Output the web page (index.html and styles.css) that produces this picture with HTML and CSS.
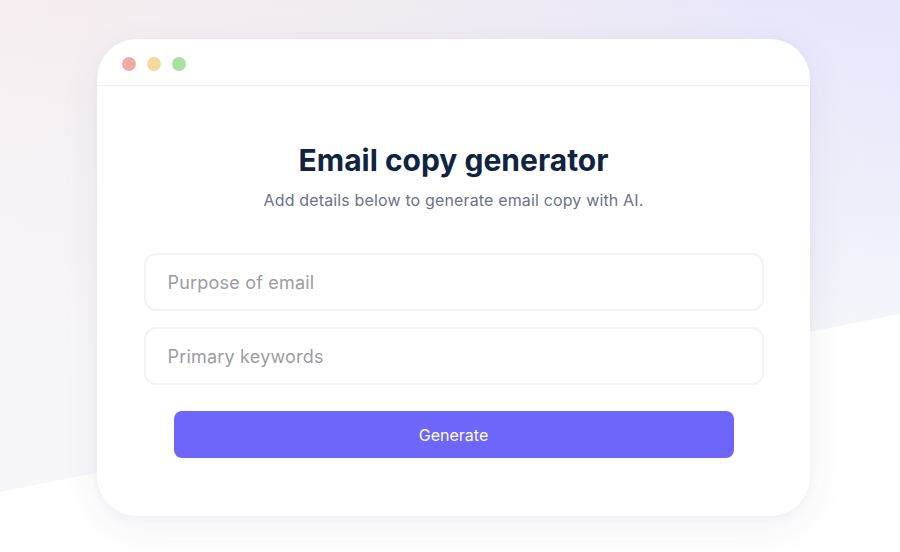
FILE: index.html
```html
<!DOCTYPE html>
<html lang="en">
<head>
<meta charset="utf-8">
<title>Email copy generator</title>
<link rel="stylesheet" href="styles.css">
</head>
<body>
<div class="bg-wedge"></div>
<main class="stage">
  <section class="window">
    <header class="titlebar">
      <span class="dot red"></span>
      <span class="dot yellow"></span>
      <span class="dot green"></span>
    </header>
    <div class="content">
      <h1 class="title">Email copy generator</h1>
      <p class="subtitle">Add details below to generate email copy with AI.</p>
      <form class="form">
        <input class="field" type="text" placeholder="Purpose of email">
        <input class="field" type="text" placeholder="Primary keywords">
        <button class="btn" type="button">Generate</button>
      </form>
    </div>
  </section>
</main>
</body>
</html>
```

FILE: styles.css
```css
* { box-sizing: border-box; }
html, body { margin: 0; height: 100%; }
body {
  font-family: Inter, "Noto Sans", sans-serif;
  background:
    linear-gradient(90deg, #f6eef0 0%, #f1ecf2 45%, #e8e7fa 85%, #e5e6fb 100%);
  position: relative;
  overflow: hidden;
  width: 900px;
  height: 552px;
}
body::before {
  content: "";
  position: absolute;
  inset: 0;
  background: linear-gradient(180deg, rgba(248,248,251,0) 0%, rgba(248,248,251,0.6) 45%, #f7f7fa 70%);
}
.bg-wedge {
  position: absolute;
  inset: 0;
  background: #ffffff;
  clip-path: polygon(0 492px, 900px 314px, 900px 552px, 0 552px);
}
.stage {
  position: relative;
  padding: 39px 0 0 97px;
}
.window {
  width: 713px;
  height: 477px;
  background: #ffffff;
  border-radius: 40px;
  box-shadow: 0 10px 40px rgba(60, 60, 110, 0.07), 0 2px 8px rgba(60, 60, 110, 0.03);
  display: flex;
  flex-direction: column;
}
.titlebar {
  height: 47px;
  border-bottom: 1px solid #f1f1f3;
  display: flex;
  align-items: center;
  gap: 11px;
  padding: 3px 0 0 25px;
}
.dot {
  width: 14px;
  height: 14px;
  border-radius: 50%;
}
.red { background: #f6aaa6; }
.yellow { background: #f8d99b; }
.green { background: #a9e1a1; }
.content {
  display: flex;
  flex-direction: column;
  align-items: center;
  padding-top: 54px;
}
.title {
  margin: 0;
  font-size: 30px;
  font-weight: 700;
  color: #0f2441;
  letter-spacing: 0;
  line-height: 40px;
}
.subtitle {
  margin: 8px 0 0;
  font-size: 16px;
  color: #6b7388;
  line-height: 24px;
  letter-spacing: 0.15px;
}
.form {
  display: flex;
  flex-direction: column;
  align-items: center;
  gap: 16px;
  margin-top: 41px;
  width: 100%;
}
.field {
  width: 620px;
  height: 58px;
  border: 2px solid #f3f3f4;
  border-radius: 12px;
  padding: 0 22px;
  font-family: inherit;
  font-size: 18px;
  letter-spacing: 0.2px;
  color: #333;
  background: #fff;
  outline: none;
}
.field::placeholder { color: #9c9ca1; }
.btn {
  margin-top: 10px;
  width: 560px;
  height: 47px;
  border: none;
  border-radius: 8px;
  background: #6e66fb;
  color: #ffffff;
  font-family: inherit;
  font-size: 16px;
  font-weight: 400;
}
```
